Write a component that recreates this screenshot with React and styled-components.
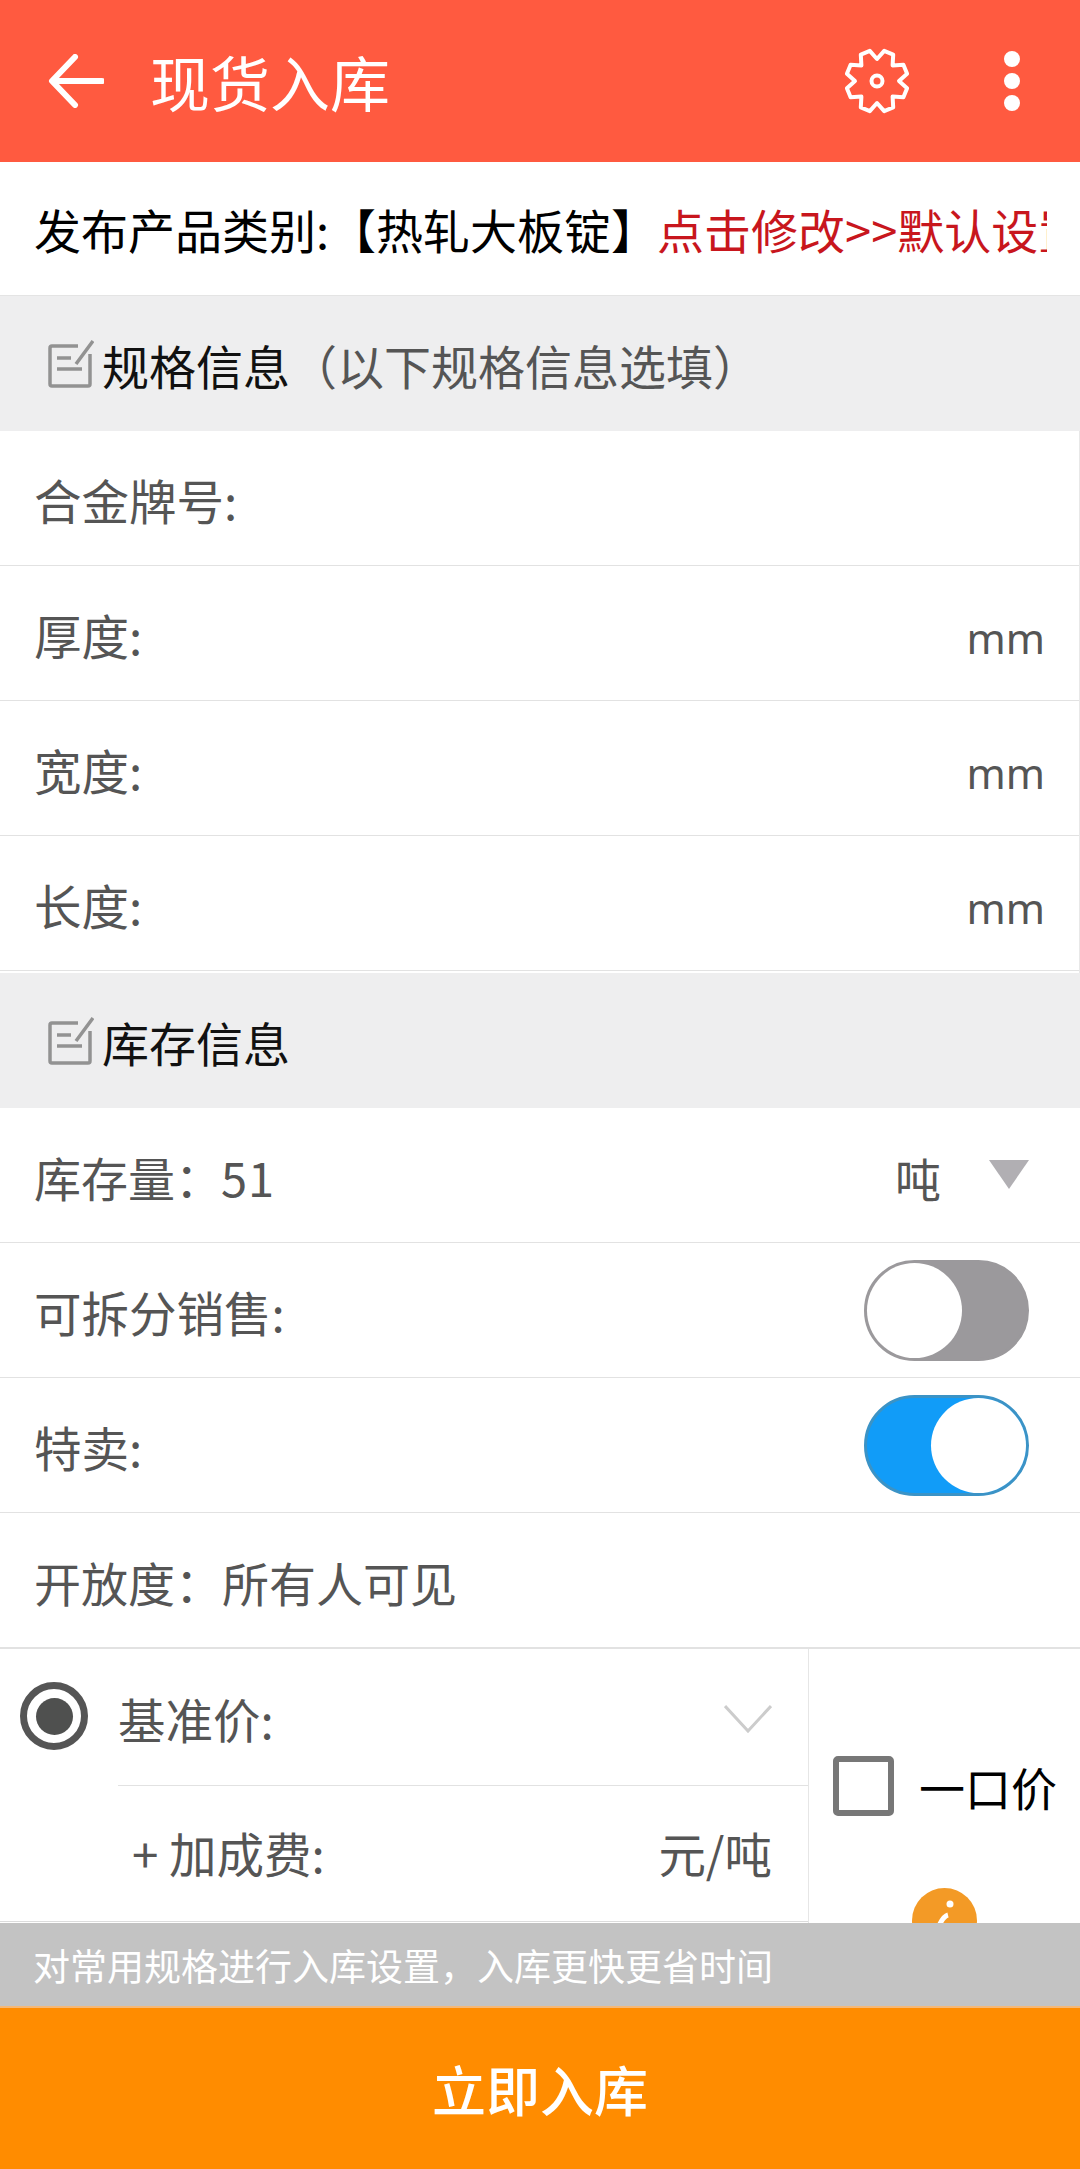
import React from "react";
import styled, { createGlobalStyle } from "styled-components";

const Global = createGlobalStyle`
  html, body { margin: 0; padding: 0; background: #fff; }
  * { box-sizing: border-box; }
  body { font-family: "Noto Sans CJK SC", "Noto Sans", sans-serif; }
`;

const Screen = styled.div`
  width: 1080px; height: 2169px; display: flex; flex-direction: column; overflow: hidden; background: #fff;
`;
const Header = styled.header`
  flex: none; height: 162px; background: #ff5a40; display: flex; align-items: center; padding: 0 0 0 48px; color: #fff;
`;
const BackIcon = styled.svg`width: 56px; height: 54px; flex: none; margin-top: 0;`;
const Title = styled.h1`
  margin: 0 0 0 46px; font-size: 60px; font-weight: 400; line-height: 1; flex: 1; white-space: nowrap;
`;
const GearIcon = styled.svg`width: 68px; height: 68px; flex: none; margin-right: 93px;`;
const Dots = styled.div`
  display: flex; flex-direction: column; gap: 6px; margin-right: 60px; flex: none;
  i { width: 16px; height: 16px; border-radius: 50%; background: #fff; display: block; }
`;
const Body = styled.main`flex: 1; min-height: 0; overflow: hidden;`;
const Notice = styled.div`
  height: 134px; padding: 0 33px 0 34px; display: flex; align-items: center; border-bottom: 1px solid #e4e4e4;
`;
const NoticeText = styled.div`
  width: 100%; overflow: hidden; white-space: nowrap; font-size: 47px; line-height: 60px; color: #000;
  em { font-style: normal; color: #c8161d; margin-left: -1px; }
`;
const Section = styled.div`
  height: 135px; background: #eeeeef; display: flex; align-items: center; padding: 2px 0 0 48px; font-size: 47px; color: #111;
  span { color: #555; }
`;
const NoteIcon = styled.svg`width: 46px; height: 48px; flex: none; margin-right: 8px; margin-top: -2px;`;
const Row = styled.div`
  height: ${p => (p.$last ? "134px" : "135px")}; display: flex; align-items: center; justify-content: space-between; padding: 3px 34px 0;
  font-size: ${p => (p.$last ? "47px" : "47.5px")}; color: #555; border-bottom: ${p => (p.$last ? "none" : "1px solid #e2e2e2")}; white-space: nowrap;
`;
const Group = styled.div`
  display: flex; flex-direction: column; padding-bottom: 2px;
  border-right: 1px solid #e8e8e8; border-bottom: 0;
`;
const Unit = styled.span`font-family: "Noto Sans", sans-serif; font-size: 42px; position: relative; top: 3px;`;
const Stock = styled.span`
  font-size: 47px;
  b { font-weight: 400; letter-spacing: 1px; margin-left: -1px; }
`;
const TonWrap = styled.div`display: flex; align-items: center; margin-right: 17px; font-size: 46px;`;
const Triangle = styled.i`
  display: block; width: 0; height: 0; margin-left: 48px; margin-top: -4px;
  border-left: 20px solid transparent; border-right: 20px solid transparent; border-top: 29px solid #b1afb3;
`;
const Toggle = styled.div`
  width: 165px; height: 101px; border-radius: 51px; position: relative; margin-right: 17px; margin-top: -3px;
  background: ${p => (p.$on ? "#119cf8" : "#9b999c")};
  border: 3px solid ${p => (p.$on ? "#3b93c6" : "#9b999c")};
  &::after {
    content: ""; position: absolute; top: 0; width: 95px; height: 95px; border-radius: 50%; background: #fff;
    ${p => (p.$on ? "right: 0;" : "left: 0;")}
  }
`;
const Price = styled.div`
  display: grid; grid-template-columns: 809px 1fr; border-top: 2px solid #e2e2e2; height: 340px;
`;
const PriceLeft = styled.div`
  border-right: 1px solid #e6e6e6; display: grid; grid-template-columns: 118px 1fr; grid-template-rows: 137px 135px 1fr;
`;
const Radio = styled.div`
  width: 68px; height: 68px; border-radius: 50%; border: 7px solid #555; margin: 33px 0 0 20px; display: flex; align-items: center; justify-content: center;
  &::after { content: ""; width: 37px; height: 37px; border-radius: 50%; background: #4f504f; }
`;
const PriceRow = styled.div`
  display: flex; align-items: center; justify-content: space-between; font-size: 47.5px; color: #555;
  padding: ${p => (p.$sub ? "0 36px 2px 14px" : "3px 36px 0 0")};
  border-bottom: ${p => (p.$sub ? "none" : "1px solid #e2e2e2")}; white-space: nowrap;
`;
const Spacer = styled.div``;
const BottomLine = styled.div`grid-column: 1 / 3; border-top: 1px solid #dcdcdc;`;
const PriceRight = styled.div`position: relative;`;
const OneWrap = styled.div`
  display: flex; align-items: center; position: absolute; top: 104px; left: 24px; font-size: 46px; color: #000; white-space: nowrap;
`;
const Check = styled.div`
  width: 61px; height: 60px; border: 6px solid #777; border-radius: 5px; margin-right: 25px; flex: none;
`;
const InfoBadge = styled.svg`
  position: absolute; top: 239px; left: 103px; width: 65px; height: 65px;
`;
const Tip = styled.div`
  flex: none; height: 83px; background: #c3c3c3; color: #fff; font-size: 37px; display: flex; align-items: center; padding-left: 33px; white-space: nowrap;
`;
const Submit = styled.button`
  flex: none; height: 163px; width: 100%; border: 0; border-top: 2px solid #f4b878; background: #ff8c00; color: #fff; font-family: inherit; font-size: 54px; font-weight: 500; padding: 0; margin: 0;
`;

const gearPath = (() => {
  const teeth = 8, cx = 34, cy = 34, R = 31, r = 22;
  const pts = [];
  for (let i = 0; i < teeth; i++) {
    const a = ((i + 0.5) * 2 * Math.PI) / teeth - Math.PI / 2;
    const step = (2 * Math.PI) / teeth;
    [[-0.5, r], [-0.2, R], [0.2, R], [0.5, r]].forEach(([f, rad]) => {
      const t = a + f * step;
      pts.push(`${(cx + rad * Math.cos(t)).toFixed(1)} ${(cy + rad * Math.sin(t)).toFixed(1)}`);
    });
  }
  return `M${pts.join("L")}Z`;
})();

const Note = () => (
  <NoteIcon viewBox="0 0 46 48" fill="none" stroke="#929292" strokeWidth="3.5">
    <path d="M30 6H4a2 2 0 0 0-2 2v36a2 2 0 0 0 2 2h36a2 2 0 0 0 2-2V14" strokeLinejoin="round" />
    <path d="M28 24 45 1M9 18h14M9 29h25" />
  </NoteIcon>
);

export default function App() {
  return (
    <Screen>
      <Global />
      <Header>
        <BackIcon viewBox="0 0 56 54" fill="none" stroke="#fff" strokeWidth="6" strokeLinecap="round" strokeLinejoin="round">
          <path d="M54 27H5M27 3 4 27l23 24" />
        </BackIcon>
        <Title>现货入库</Title>
        <GearIcon viewBox="0 0 68 68" fill="none" stroke="#fff" strokeWidth="4" strokeLinejoin="round">
          <path d={gearPath} />
          <circle cx="34" cy="34" r="5.5" />
        </GearIcon>
        <Dots><i /><i /><i /></Dots>
      </Header>
      <Body>
        <Notice>
          <NoticeText>发布产品类别:【热轧大板锭】<em>点击修改&gt;&gt;默认设置</em></NoticeText>
        </Notice>
        <Section><Note />规格信息<span>（以下规格信息选填）</span></Section>
        <Group>
          <Row>合金牌号:</Row>
          <Row>厚度:<Unit>mm</Unit></Row>
          <Row>宽度:<Unit>mm</Unit></Row>
          <Row>长度:<Unit>mm</Unit></Row>
        </Group>
        <Section><Note />库存信息</Section>
        <Row>
          <Stock>库存量：<b>51</b></Stock>
          <TonWrap>吨<Triangle /></TonWrap>
        </Row>
        <Row>可拆分销售:<Toggle /></Row>
        <Row>特卖:<Toggle $on /></Row>
        <Row $last>开放度：所有人可见</Row>
        <Price>
          <PriceLeft>
            <Radio />
            <PriceRow>
              基准价:
              <svg width="48" height="28" viewBox="0 0 48 28" fill="none" stroke="#ccc" strokeWidth="3"><path d="M1 1l23 25L47 1" /></svg>
            </PriceRow>
            <Spacer />
            <PriceRow $sub>+ 加成费:<span>元/吨</span></PriceRow>
            <BottomLine />
          </PriceLeft>
          <PriceRight>
            <OneWrap><Check />一口价</OneWrap>
            <InfoBadge viewBox="0 0 65 65">
              <circle cx="32.5" cy="32.5" r="32.5" fill="#f39a26" />
              <circle cx="38" cy="16" r="3.5" fill="#fff" />
              <path d="M36 27c-4 1-7 6-10 13-2 5-1 8 3 6" fill="none" stroke="#fff" strokeWidth="5" />
            </InfoBadge>
          </PriceRight>
        </Price>
      </Body>
      <Tip>对常用规格进行入库设置，入库更快更省时间</Tip>
      <Submit>立即入库</Submit>
    </Screen>
  );
}
